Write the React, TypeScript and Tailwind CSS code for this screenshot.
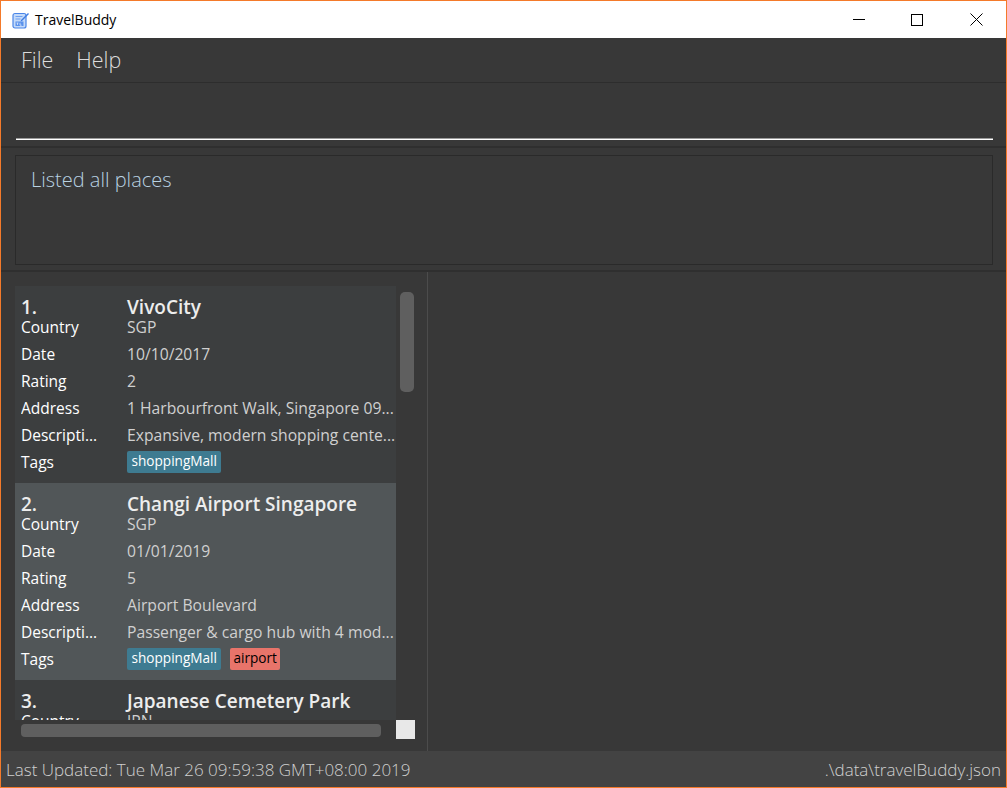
import React from "react";

const font = "font-['Open_Sans','Noto_Sans',sans-serif]";

type Place = {
  num: string;
  name: string;
  country: string;
  date: string;
  rating: string;
  address: string;
  description: string;
  tags: string[];
};

const places: Place[] = [
  {
    num: "1.",
    name: "VivoCity",
    country: "SGP",
    date: "10/10/2017",
    rating: "2",
    address: "1 Harbourfront Walk, Singapore 09...",
    description: "Expansive, modern shopping cente...",
    tags: ["shoppingMall"],
  },
  {
    num: "2.",
    name: "Changi Airport Singapore",
    country: "SGP",
    date: "01/01/2019",
    rating: "5",
    address: "Airport Boulevard",
    description: "Passenger & cargo hub with 4 mod...",
    tags: ["shoppingMall", "airport"],
  },
  {
    num: "3.",
    name: "Japanese Cemetery Park",
    country: "JPN",
    date: "",
    rating: "",
    address: "",
    description: "",
    tags: [],
  },
];

function AppIcon() {
  return (
    <svg width="18" height="18" viewBox="0 0 18 18" fill="none">
      <rect x="1" y="2.5" width="13" height="14.5" rx="2" fill="#c4daf9" stroke="#4a86e8" strokeWidth="1.2" />
      <path d="M3.5 5.5h7M3.5 8h5" stroke="#6fa0ee" strokeWidth="1" />
      <rect x="3.5" y="10.5" width="8" height="4.5" fill="#5a92ec" />
      <path d="M4.5 12h2M5.5 12v2M8 11.8v2.4h1.6" stroke="#dce9fc" strokeWidth="0.8" />
      <path d="M9 9l7-7 1 1-7 7-1.5.5z" fill="#3f7de2" />
    </svg>
  );
}

function Row({ label, children }: { label: string; children: React.ReactNode }) {
  return (
    <div className="flex h-[27px] items-center">
      <div className="w-[106px] shrink-0 truncate text-[15.5px] text-white">{label}</div>
      <div className="whitespace-nowrap text-[15.7px] text-[#d0d0d0]">{children}</div>
    </div>
  );
}

function Card({ place, alt }: { place: Place; alt: boolean }) {
  return (
    <div className={`h-[197px] shrink-0 overflow-hidden px-[6px] pt-[8px] ${alt ? "bg-[#515658]" : "bg-[#3c3e3f]"}`}>
      <div className="flex h-[26px] items-center text-[19px] font-semibold text-[#ededed]">
        <div className="w-[106px] shrink-0">{place.num}</div>
        <div className="whitespace-nowrap">{place.name}</div>
      </div>
      <div className="-mt-[6px]">
        <Row label="Country">{place.country}</Row>
        <Row label="Date">{place.date}</Row>
        <Row label="Rating">{place.rating}</Row>
        <Row label="Address">{place.address}</Row>
        <Row label="Descripti...">{place.description}</Row>
        <div className="flex h-[27px] items-center">
          <div className="w-[106px] shrink-0 text-[15.5px] text-white">Tags</div>
          <div className="flex gap-[9px]">
            {place.tags.map((t) => (
              <span
                key={t}
                className={`flex h-[22px] -translate-y-[1px] items-center rounded-[2px] text-[13.6px] ${
                  t === "airport" ? "bg-[#e8746a] px-[3px] text-black" : "bg-[#3e7b91] px-[4.5px] text-white"
                }`}
              >
                {t}
              </span>
            ))}
          </div>
        </div>
      </div>
    </div>
  );
}

export default function App() {
  return (
    <div className={`flex h-[788px] w-[1007px] flex-col overflow-hidden border border-[#f47a2a] bg-[#383838] ${font}`}>
      {/* title bar */}
      <div className="flex h-[37px] shrink-0 items-center bg-white">
        <div className="ml-[11px] mr-[5px] flex">
          <AppIcon />
        </div>
        <div className="text-[14px] text-black">TravelBuddy</div>
        <div className="ml-auto flex h-full items-center">
          <div className="flex w-[57px] justify-center">
            <div className="h-px w-[12px] bg-black" />
          </div>
          <div className="flex w-[60px] justify-center">
            <div className="h-[12px] w-[12px] border border-black" />
          </div>
          <div className="flex w-[59px] justify-center pr-[1px]">
            <svg width="13" height="13" viewBox="0 0 13 13">
              <path d="M0.5 0.5l12 12M12.5 0.5l-12 12" stroke="#000" strokeWidth="1" />
            </svg>
          </div>
        </div>
      </div>

      {/* menu */}
      <div className="flex h-[45px] shrink-0 items-center gap-[23px] border-b border-[#2d2d2d] pl-[20px] text-[21.5px] font-light text-[#dcdcdc]">
        <span>File</span>
        <span>Help</span>
      </div>

      {/* command box */}
      <div className="flex h-[65px] shrink-0 items-end border-b-2 border-[#2f2f2f] pb-[6px] pl-[15px] pr-[13px]">
        <div className="h-[2px] w-full border-t border-[#9a9a9a] bg-white" />
      </div>

      {/* result display */}
      <div className="h-[124px] shrink-0 border-b-2 border-[#2f2f2f] pb-[5px] pl-[14px] pr-[13px] pt-[7px]">
        <div className="h-full border border-[#2a2a2a] px-[15px] pt-[9px] text-[20px] font-light text-[#b9d2e2]">
          Listed all places
        </div>
      </div>

      {/* list + detail */}
      <div className="flex min-h-0 flex-1">
        <div className="relative w-[427px] shrink-0 border-r border-[#4c4c4c] pl-[14px] pt-[14px]">
          <div className="flex h-[434px] w-[381px] flex-col overflow-hidden">
            {places.map((p, i) => (
              <Card key={p.num} place={p} alt={i === 1} />
            ))}
          </div>
          <div className="absolute left-[399px] top-[20px] h-[100px] w-[14px] rounded-[5px] bg-[#5f5f5f]" />
          <div className="absolute left-[20px] top-[452px] h-[13px] w-[360px] rounded-[4px] bg-[#5f5f5f]" />
          <div className="absolute left-[395px] top-[448px] h-[19px] w-[19px] bg-[#e8e8e8]" />
        </div>
        <div className="flex-1" />
      </div>

      {/* status bar */}
      <div className="flex h-[36px] shrink-0 items-center justify-between bg-[#434343] pl-[5px] pr-[5px] pt-[1px] text-[17px] font-light text-[#d0d0d0]">
        <span>Last Updated: Tue Mar 26 09:59:38 GMT+08:00 2019</span>
        <span>.\data\travelBuddy.json</span>
      </div>
    </div>
  );
}
